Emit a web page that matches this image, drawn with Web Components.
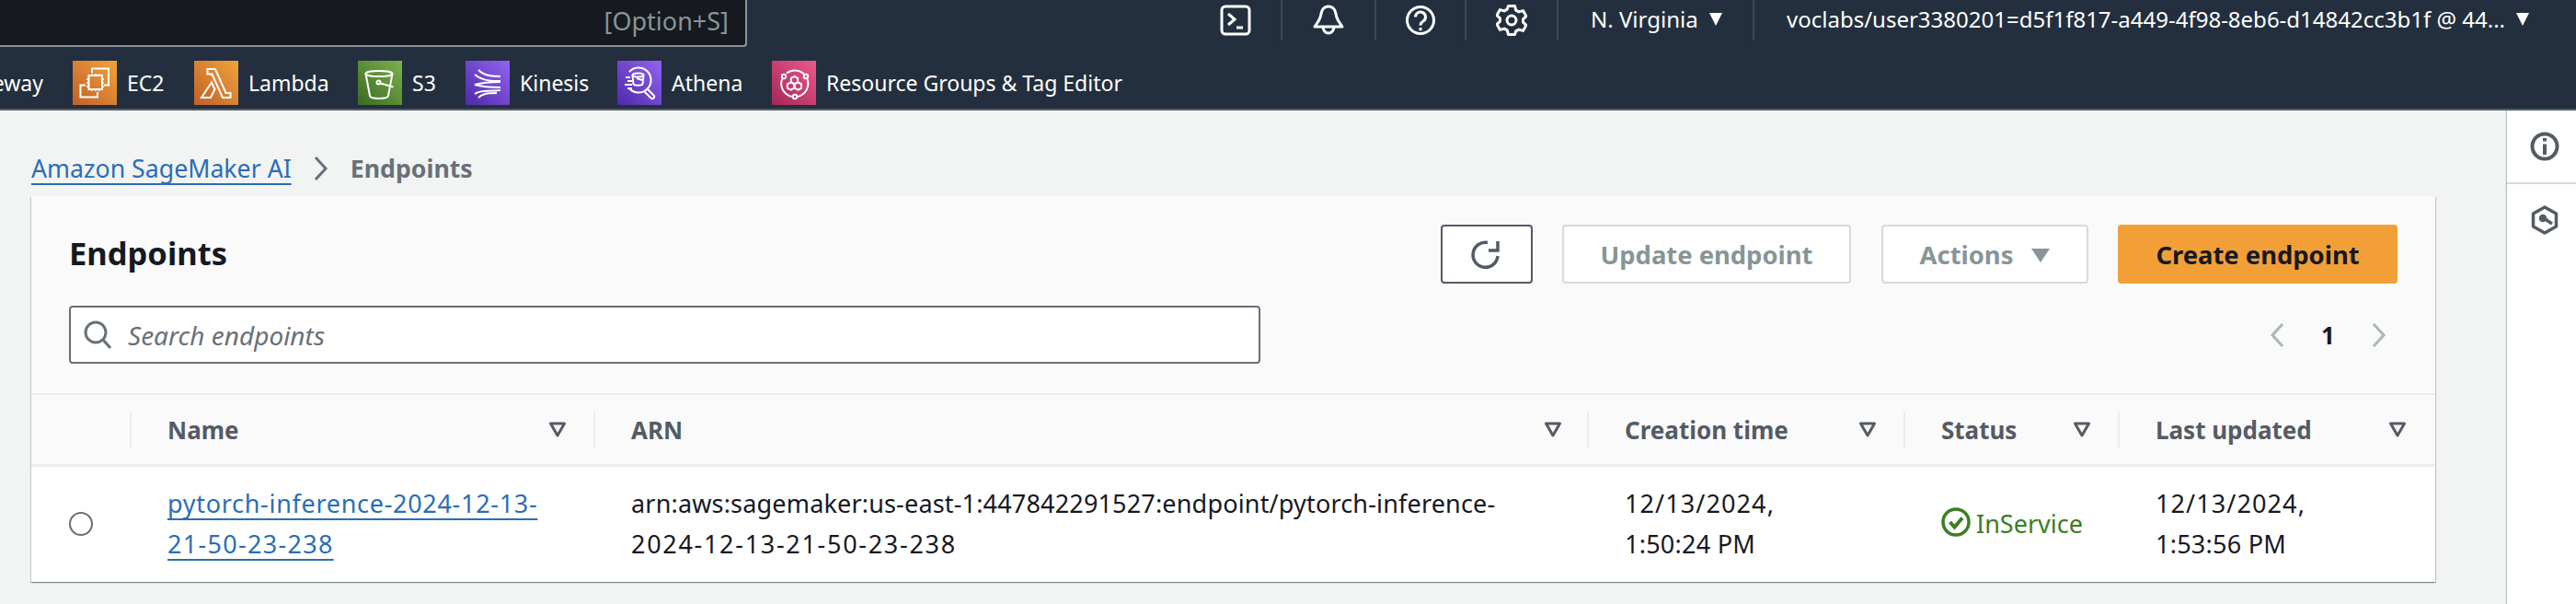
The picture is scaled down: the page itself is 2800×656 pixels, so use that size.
<!DOCTYPE html>
<html><head><meta charset="utf-8">
<style>
html,body{margin:0;padding:0;width:2800px;height:656px;overflow:hidden;background:#f2f3f3;font-family:"Noto Sans",sans-serif;color:#16191f}
</style></head><body>
<aws-page>
  <aws-header>
    <nav-item slot="nav" w="100"><svg width="34" height="34" viewBox="0 0 34 34" fill="none" stroke="#fff" stroke-width="3"><rect x="2" y="2" width="30" height="30" rx="4"/><path d="M9 10l7 6-7 6M18 25h7"/></svg></nav-item>
    <nav-item slot="nav" w="102"><svg width="34" height="34" viewBox="0 0 34 34" fill="none" stroke="#fff" stroke-width="3" stroke-linejoin="round"><path d="M17 2c-5 0-7.500 4-8 8-.7 6-3.500 9-7 14h30c-3.500-5-6.300-8-7-14-.5-4-3-8-8-8z"/><path d="M11 24a6 7 0 0 0 12 0"/></svg></nav-item>
    <nav-item slot="nav" w="98"><svg width="34" height="34" viewBox="0 0 34 34" fill="none" stroke="#fff" stroke-width="3"><circle cx="17" cy="17" r="14.5"/><path d="M11.5 13.5a5.5 5.5 0 1 1 8.5 4.6c-2 1.3-3 2-3 4.4"/><path d="M17 25v3.2"/></svg></nav-item>
    <nav-item slot="nav" w="100"><svg width="34" height="34" viewBox="0 0 34 34" fill="none" stroke="#fff" stroke-width="3" stroke-linejoin="round"><path d="M13.5 2h7l1.2 4.6 3.2 1.8 4.6-1.3 3.4 6-3.4 3.3v3.2l3.4 3.3-3.4 6-4.6-1.3-3.2 1.8L20.500 33h-7l-1.200-4.600-3.200-1.800-4.600 1.300-3.400-6 3.400-3.300v-3.200L1 12.100l3.400-6 4.600 1.300 3.200-1.800z" transform="translate(0 -.5)"/><circle cx="17" cy="17" r="5"/></svg></nav-item>
    <nav-menu slot="nav" w="213">N. Virginia</nav-menu>
    <nav-menu slot="nav" last>voclabs/user3380201=d5f1f817-a449-4f98-8eb6-d14842cc3b1f @ 44...</nav-menu>

    <clip-label slot="short">eway</clip-label>
    <aws-shortcut slot="short" label="EC2" w="132" style="margin-left:32px;--a:#c0602a;--b:#f2a33a"><svg viewBox="0 0 48 48" fill="none" stroke="#fff" stroke-width="2"><path d="M21 13V8.500h18V26.500h-5M14 26.500H8.500V39.500H27V34"/><rect x="17.500" y="16" width="14.500" height="15"/><path d="M21 16v-2M25 16v-2M29 16v-2M21 33v-2M25 33v-2M29 33v-2M15 20h2.500M15 24h2.500M15 28h2.500M32 20h2M32 24h2M32 28h2" stroke-width="1.500"/></svg></aws-shortcut>
    <aws-shortcut slot="short" label="Lambda" w="178" style="--a:#c0602a;--b:#f2a33a"><svg viewBox="0 0 48 48" fill="none" stroke="#fff" stroke-width="2" stroke-linejoin="miter"><path d="M14.500 9h8.500l11.500 26h5v5h-8.500L19.500 14.500h-5zM19 23.500l3.500 7.500-4.500 9H8z"/></svg></aws-shortcut>
    <aws-shortcut slot="short" label="S3" w="117" style="--a:#3a6a22;--b:#7cb24c"><svg viewBox="0 0 48 48" fill="none" stroke="#fff" stroke-width="2"><ellipse cx="23" cy="14" rx="14.500" ry="3"/><path d="M8.500 14l4.500 24c.4 2 5 3 10 3s9.500-1 10-3l4.500-24"/><circle cx="22.500" cy="23.500" r="2"/><path d="M24.500 24.500l14 4"/></svg></aws-shortcut>
    <aws-shortcut slot="short" label="Kinesis" w="165" style="--a:#4f2aa8;--b:#9263f2"><svg viewBox="0 0 48 48" fill="none" stroke="#fff" stroke-width="2"><path d="M14 10c4 4 9 7 24 7M10 15c6 5 12 7 28 7M10 26c7-2 14-3 28-3M10 26c7 2 14 3 28 3M10 36c7-5 14-2 28-4M14 40c4-4 9-5 20-5"/></svg></aws-shortcut>
    <aws-shortcut slot="short" label="Athena" w="168" style="--a:#4f2aa8;--b:#9263f2"><svg viewBox="0 0 48 48" fill="none" stroke="#fff" stroke-width="2"><path d="M13 12A13.500 13.500 0 1 1 13 30"/><path d="M32 30l7.500 7.500a2 2 0 0 1-3 3L29 33"/><ellipse cx="22.500" cy="15.500" rx="6" ry="2"/><path d="M16.500 15.500l1 10c1 1.500 9 1.500 10 0l1-10M21 19l7.500 2.500"/><path d="M9 18h5M11 22h5M8 26h8M11 30h5"/></svg></aws-shortcut>
    <aws-shortcut slot="short" label="Resource Groups &amp; Tag Editor" style="--a:#a5265a;--b:#ea5a8a"><svg viewBox="0 0 48 48" fill="none" stroke="#fff" stroke-width="2"><path d="M16 13.500A14.500 14.500 0 0 1 35 14.500M38.500 20A14.500 14.500 0 0 1 28 39M22 39A14.500 14.500 0 0 1 11 20"/><circle cx="13" cy="17" r="2.200"/><circle cx="37" cy="17" r="2.200"/><circle cx="25" cy="39" r="2.200"/><path d="M24.500 16.800l3.600 2.100v4.200l-3.600 2.100-3.600-2.100v-4.200zM20.500 23.300l3.600 2.100v4.200l-3.600 2.100-3.600-2.100v-4.200zM28.500 23.300l3.600 2.100v4.200l-3.600 2.100-3.600-2.100v-4.200z"/></svg></aws-shortcut>
  </aws-header>
  <aws-main>
    <aws-crumbs></aws-crumbs>
    <aws-card>
      <card-head>
        <aws-btn slot="btn" kind="icon"><svg width="38" height="38" viewBox="0 0 38 38" fill="none" stroke="#545b64" stroke-width="3.500"><path d="M31 21A13.500 13.500 0 1 1 20 6.500"/><path d="M21 15h10V5"/></svg></aws-btn>
        <aws-btn slot="btn" kind="off" style="margin-left:32px;width:314px">Update endpoint</aws-btn>
        <aws-btn slot="btn" kind="off" arrow style="margin-left:33px;width:225px">Actions</aws-btn>
        <aws-btn slot="btn" kind="primary" style="margin-left:32px;width:304px">Create endpoint</aws-btn>
      </card-head>
      <aws-table>
        <t-h></t-h><t-h label="Name"></t-h><t-h label="ARN"></t-h><t-h label="Creation time"></t-h><t-h label="Status"></t-h><t-h label="Last updated"></t-h>
        <t-radio></t-radio>
        <t-c><a-link><t-l s=".7">pytorch-inference-2024-12-13-</t-l><br><t-l s="1.3">21-50-23-238</t-l></a-link></t-c>
        <t-c><t-l s=".17">arn:aws:sagemaker:us-east-1:447842291527:endpoint/pytorch-inference-</t-l><br><t-l s="1.7">2024-12-13-21-50-23-238</t-l></t-c>
        <t-c><t-l s="1.1">12/13/2024,</t-l><br><t-l s=".25">1:50:24 PM</t-l></t-c>
        <t-c><status-ok>InService</status-ok></t-c>
        <t-c><t-l s="1.1">12/13/2024,</t-l><br><t-l s=".25">1:53:56 PM</t-l></t-c>
      </aws-table>
    </aws-card>
  </aws-main>
  <aws-side></aws-side>
</aws-page>
<script>
function def(name, html, setup){
  customElements.define(name, class extends HTMLElement{
    constructor(){super();this.attachShadow({mode:'open'}).innerHTML=html;}
    connectedCallback(){ if(setup) setup(this,this.shadowRoot); }
  });
}
def('aws-page',`<style>:host{display:grid;grid-template-columns:2725px 75px;grid-template-rows:120px 536px;width:2800px;height:656px;overflow:hidden}</style><slot></slot>`);
def('aws-header',`<style>
:host{display:flex;flex-direction:column;grid-column:1/3;background:#232f3e;border-bottom:2px solid #545b64;box-sizing:border-box;height:120px;color:#fff;font-size:24px;overflow:hidden}
.r1{display:flex;height:56px}
.search{flex:none;width:812px;height:51px;box-sizing:border-box;background:#16191f;border:solid #879596;border-width:0 2px 2px 0;border-bottom-right-radius:4px;color:#879596;font-size:27px;display:flex;justify-content:flex-end;align-items:center;padding:0 18px 4px 0}
.nav{margin-left:auto;display:flex;align-items:flex-start}
.r2{display:flex;align-items:center;height:48px;margin-top:10px;font-size:23px}
</style><div class="r1"><div class="search">[Option+S]</div><div class="nav"><slot name="nav"></slot></div></div>
<div class="r2"><slot name="short"></slot></div>`);
def('nav-item',`<style>:host{display:flex;align-items:flex-start;justify-content:center;box-sizing:border-box;height:44px;padding-top:5px;border-right:2px solid #414750}svg,::slotted(svg){display:block}</style><slot></slot>`,
 (el)=>{el.style.width=el.getAttribute('w')+'px'});
def('nav-menu',`<style>:host{display:flex;align-items:flex-start;box-sizing:border-box;height:44px;padding:3px 0 0 35px;border-right:2px solid #414750;white-space:nowrap;line-height:36px}
:host([last]){border-right:0;width:893px}
i{display:block;width:0;height:0;border:solid transparent;border-width:14px 7.500px 0;border-top-color:#fff;margin:11px 0 0 12px}
</style><slot></slot><i></i>`,(el)=>{ if(el.getAttribute('w')) el.style.width=el.getAttribute('w')+'px'});
def('clip-label',`<style>:host{display:flex;justify-content:flex-end;flex:none;width:47px;overflow:hidden;white-space:nowrap;line-height:48px}</style><slot></slot>`);
def('aws-shortcut',`<style>:host{display:flex;align-items:center;flex:none;height:48px;white-space:nowrap}
.i{width:48px;height:48px;background:linear-gradient(45deg,var(--a),var(--b));margin-right:11px}
::slotted(svg){display:block;width:48px;height:48px}</style><div class="i"><slot></slot></div><span id="t"></span>`,
 (el,s)=>{s.getElementById('t').textContent=el.getAttribute('label');const w=el.getAttribute('w');if(w)el.style.width=w+'px'});
def('aws-main',`<style>:host{display:block;box-sizing:border-box;padding:0 78px 0 34px;min-width:0}</style><slot></slot>`);
def('aws-crumbs',`<style>:host{display:flex;align-items:center;height:93px;padding-top:32px;box-sizing:border-box;font-size:26.700px;white-space:nowrap}
a{color:#2a6eb6;text-decoration:underline;text-decoration-thickness:2px;text-underline-offset:6px}
svg{margin:0 24px}
b{font-weight:700;color:#687078}</style><a>Amazon SageMaker AI</a><svg width="16" height="26" viewBox="0 0 16 26" fill="none" stroke="#687078" stroke-width="3"><path d="M2 1l11 12L2 25"/></svg><b>Endpoints</b>`);
def('aws-card',`<style>:host{display:block;background:#fafafa;box-shadow:0 1px 1px rgba(0,28,36,.3),1px 1px 1px rgba(0,28,36,.15),-1px 1px 1px rgba(0,28,36,.15);height:419px}</style><slot></slot>`);
def('card-head',`<style>:host{display:block;box-sizing:border-box;height:216px;padding:31px 41px 0}
.top{display:flex;align-items:center;height:64px}
h1{margin:0 0 2px;font-size:34.500px;font-weight:700;line-height:62px;flex:none}
.b{margin-left:auto;display:flex}
.s{display:flex;align-items:center;justify-content:space-between;margin-top:24px;height:63px}
.in{width:1295px;height:63px;box-sizing:border-box;background:#fff;border:2px solid #687078;border-radius:4px;display:flex;align-items:center;padding-left:14px;gap:18px;color:#687078;font-style:italic;font-size:28px}
.pg{display:flex;align-items:center;gap:0;margin-right:12px}
.pg span{font-weight:700;font-size:26px;width:95px;text-align:center;color:#16191f}
</style><div class="top"><h1>Endpoints</h1><div class="b"><slot name="btn"></slot></div></div>
<div class="s"><div class="in"><svg width="30" height="32" viewBox="0 0 30 32" fill="none" stroke="#687078" stroke-width="3"><circle cx="13" cy="13" r="11"/><path d="M21 21l8 9"/></svg>Search endpoints</div>
<div class="pg"><svg width="16" height="26" viewBox="0 0 16 26" fill="none" stroke="#aab7b8" stroke-width="3"><path d="M14 1L3 13l11 12"/></svg><span>1</span><svg width="16" height="26" viewBox="0 0 16 26" fill="none" stroke="#aab7b8" stroke-width="3"><path d="M2 1l11 12L2 25"/></svg></div></div>`);
def('aws-btn',`<style>:host{display:flex;align-items:center;justify-content:center;box-sizing:border-box;height:64px;border-radius:4px;font-weight:700;font-size:27.400px;white-space:nowrap;background:#fff}
:host([kind=icon]){width:100px;border:2px solid #545b64}
:host([kind=off]){border:2px solid #d5dbdb;color:#879596}
:host([kind=primary]){background:#f29f38;color:#16191f}
i{display:none;width:0;height:0;border:solid transparent;border-width:15px 10px 0;border-top-color:#879596;margin:2px 0 0 20px}
:host([arrow]) i{display:block}
::slotted(svg){display:block}
</style><slot></slot><i></i>`);
def('aws-table',`<style>:host{display:grid;grid-template-columns:107px 504px 1080px 344px 233px 345px;grid-template-rows:78px 124px;border-top:2px solid #eaeded;margin-top:-2px}</style><slot></slot>`);
def('t-h',`<style>:host{display:flex;align-items:center;box-sizing:border-box;height:78px;border-bottom:3px solid #eaeded;padding:0 31px 0 0;font-weight:700;font-size:26px;color:#545b64;background:#fafafa}
.d{width:2px;height:40px;background:#eaeded;margin-right:39px;flex:none}
svg{margin-left:auto;display:block;flex:none}
</style><span class="d" id="d"></span><span id="t"></span><svg id="s" width="20" height="17" viewBox="0 0 20 17" fill="none" stroke="#545b64" stroke-width="3" stroke-linejoin="round"><path d="M2.500 2h15L10 15z"/></svg>`,
 (el,s)=>{const l=el.getAttribute('label');const i=[...el.parentNode.children].indexOf(el);
  if(!l){s.getElementById('s').remove();s.getElementById('d').remove();}else{s.getElementById('t').textContent=l;}
  el.style.paddingRight=(i==5?31:i==1?29:i==2?27:29)+'px';});
def('t-radio',`<style>:host{display:flex;align-items:center;background:#fff;padding-left:41px}i{display:block;width:26px;height:26px;box-sizing:border-box;border:2px solid #687078;border-radius:50%}</style><i></i>`);
def('t-c',`<style>:host{display:flex;align-items:center;background:#fff;padding-left:41px;font-size:27px;line-height:44px;white-space:nowrap}</style><div><slot></slot></div>`);
def('t-l',`<style>:host{display:inline}</style><slot></slot>`,(el)=>{el.style.letterSpacing=el.getAttribute('s')+'px'});
def('a-link',`<style>:host{display:inline;color:#2a6eb6;text-decoration:underline;text-decoration-thickness:2px;text-underline-offset:6px}</style><slot></slot>`);
def('status-ok',`<style>:host{display:flex;align-items:center;color:#3c7d25;gap:6px}svg{display:block;margin-top:-4px}</style><svg width="32" height="32" viewBox="0 0 32 32" fill="none" stroke="#3c7d25"><circle cx="16" cy="16" r="14" stroke-width="3.500"/><path d="M9.500 16l5 5.500 8.500-10" stroke-width="4"/></svg><slot></slot>`);
def('aws-side',`<style>:host{display:block;background:#fff;box-shadow:-1px 0 1px rgba(0,28,36,.25)}
.c{display:flex;align-items:center;justify-content:center;height:78px;border-bottom:2px solid #d5dbdb;padding-left:6px}
.d{display:flex;justify-content:center;padding:23px 0 0 6px}</style>
<div class="c"><svg width="32" height="32" viewBox="0 0 32 32" fill="none" stroke="#545b64" stroke-width="4"><circle cx="16" cy="16" r="13.500"/><path d="M16 13.500V25"/><path d="M16 7v3.500"/></svg></div>
<div class="d"><svg width="30" height="32" viewBox="0 0 30 32" fill="none" stroke="#545b64" stroke-width="3.500" stroke-linejoin="round"><path d="M15 2l12.500 7v14L15 30 2.500 23V9z"/><path d="M14 14l9 6"/><circle cx="13" cy="14" r="2.500" fill="#545b64"/></svg></div>`);
</script>
</body></html>
